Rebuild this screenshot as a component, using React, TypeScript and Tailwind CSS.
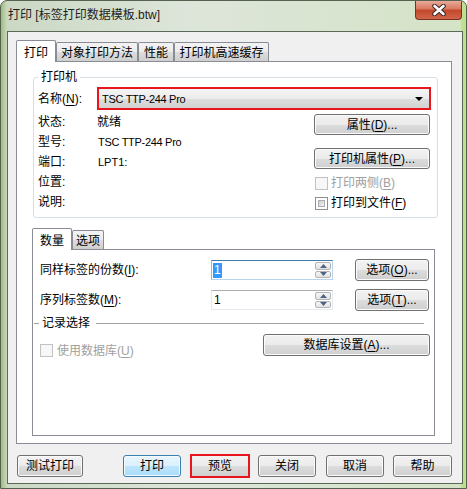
import React from "react";

const btn =
  "flex items-center justify-center rounded-[3px] border border-[#707070] bg-[linear-gradient(#f2f2f2_0%,#ebebeb_50%,#dddddd_50%,#cfcfcf_100%)] shadow-[inset_0_0_0_1px_#fbfbfb] text-[12px] leading-[16px] text-black";

function U({ children }: { children: React.ReactNode }) {
  return <span className="underline underline-offset-[2px]">{children}</span>;
}

function Check({ disabled }: { disabled?: boolean }) {
  if (disabled) {
    return <span className="block w-[13px] h-[13px] shrink-0 border border-[#c2c2c2] bg-[#f7f7f7]" />;
  }
  return (
    <span className="block w-[13px] h-[13px] shrink-0 border border-[#8e8f8f] bg-white p-[2px]">
      <span className="block w-full h-full border border-[#a9aeb5] bg-[linear-gradient(135deg,#c6cbd2,#f4f4f4)]" />
    </span>
  );
}

function SpinArrow({ up }: { up?: boolean }) {
  return (
    <span className="flex-1 flex items-center justify-center border border-[#b4b4b4] rounded-[2px] bg-[linear-gradient(#f7f7f7,#e2e2e2)]">
      <svg width="7" height="4" viewBox="0 0 7 4">
        {up ? <path d="M0 4 L3.5 0 L7 4 Z" fill="#4f6386" /> : <path d="M0 0 L7 0 L3.5 4 Z" fill="#4f6386" />}
      </svg>
    </span>
  );
}

function Spin({ focused, value }: { focused?: boolean; value: string }) {
  return (
    <div
      className={`flex w-[122px] h-[20px] border ${
        focused
          ? "border-[#b7d4ec] border-t-[#3d7bad] border-l-[#8fbbe0]"
          : "border-[#e3e9ef] border-t-[#abadb3]"
      } bg-white`}
    >
      <div className="flex-1 flex items-center pl-[1px] text-[12px]">
        {focused ? <span className="bg-[#3399ff] text-white px-[1px] leading-[15px]">{value}</span> : <span className="px-[1px]">{value}</span>}
      </div>
      <div className="flex flex-col w-[17px] gap-[1px] py-px pr-px">
        <SpinArrow up />
        <SpinArrow />
      </div>
    </div>
  );
}

function Tab({ label, w, selected }: { label: string; w: string; selected?: boolean }) {
  return selected ? (
    <div className={`${w} h-[22px] -mb-px relative z-10 flex items-center justify-center pt-[2px] border-x border-t border-[#898c95] rounded-t-[2px] bg-white`}>
      {label}
    </div>
  ) : (
    <div className={`${w} h-[19px] flex items-center justify-center pt-px border-x border-t border-[#898c95] rounded-t-[2px] bg-[linear-gradient(#f3f3f3_0%,#ebebeb_50%,#dddddd_50%,#cfcfcf_100%)]`}>
      {label}
    </div>
  );
}

export default function App() {
  return (
    <div className="w-[467px] h-[489px] flex flex-col overflow-hidden rounded-t-[7px] border border-[#55624f] bg-[linear-gradient(90deg,#9fbd7b_0px,#cbd8c3_6px,#dde5da_40%,#d5e3c7_459px,#c0de90_461px)] font-['Liberation_Sans','Noto_Sans_CJK_SC',sans-serif] text-[12px] leading-[16px] text-black">
      {/* title bar */}
      <div className="h-[30px] shrink-0 flex items-start">
        <div className="pl-[7px] pt-[6px] text-[#1e1e1e]">打印 [标签打印数据模板.btw]</div>
        <div className="ml-auto mr-[4px] -mt-px w-[47px] h-[20px] flex items-center justify-center rounded-b-[4px] border border-t-0 border-[#7b3022] bg-[linear-gradient(#eab0a2_0%,#da7a62_45%,#c3492c_55%,#d0654a_100%)]">
          <svg width="16" height="12" viewBox="0 0 16 12">
            <path d="M3.5 2 L12.5 10 M12.5 2 L3.5 10" stroke="#3a2b29" strokeWidth="4.6" strokeLinecap="round" />
            <path d="M3.5 2 L12.5 10 M12.5 2 L3.5 10" stroke="#ffffff" strokeWidth="2.6" strokeLinecap="round" />
          </svg>
        </div>
      </div>

      <div className="flex-1 flex pl-[6px] pr-[3px] pb-[4px]">
        <div className="flex-1 flex flex-col border border-[#5b6a58] bg-[#f0f0f0] pl-[8px] pr-[10px] pt-[8px]">
          {/* main tabs */}
          <div className="flex items-end h-[21px]">
            <Tab label="打印" w="w-[40px]" selected />
            <Tab label="对象打印方法" w="w-[82px]" />
            <Tab label="性能" w="w-[36px]" />
            <Tab label="打印机高速缓存" w="w-[95px]" />
          </div>

          <div className="h-[383px] border border-[#898c95] bg-white flex flex-col">
            <fieldset className="mt-[7px] ml-[16px] mr-[13px] border border-[#d5dfe5] rounded-[3px] p-0">
              <legend className="ml-[4px] px-[3px] leading-[16px]">打印机</legend>
              <div className="pl-[4px] pr-[6px] pb-[4px]">
                <div className="mt-[2px] flex items-center h-[23px]">
                  <span className="w-[59px] shrink-0">
                    名称(<U>N</U>):
                  </span>
                  <div className="flex-1 h-[23px] border-2 border-[#e8141e] flex items-center pl-[3px] pr-[6px] bg-[linear-gradient(#f4f4f4_0%,#ebebeb_50%,#dedede_50%,#d2d2d2_100%)]">
                    <span className="text-[11px] tracking-[-0.3px]">TSC TTP-244 Pro</span>
                    <svg className="ml-auto" width="8" height="4" viewBox="0 0 8 4">
                      <path d="M0 0 L8 0 L4 4 Z" fill="#000" />
                    </svg>
                  </div>
                </div>

                <div className="flex mt-[2px]">
                  <div className="flex-1 flex flex-col">
                    <div className="h-[20px] flex items-center">
                      <span className="w-[59px]">状态:</span>
                      <span>就绪</span>
                    </div>
                    <div className="h-[20px] flex items-center">
                      <span className="w-[59px]">型号:</span>
                      <span className="text-[11px] tracking-[-0.3px] pl-px">TSC TTP-244 Pro</span>
                    </div>
                    <div className="h-[20px] flex items-center">
                      <span className="w-[59px]">端口:</span>
                      <span className="text-[11px] pl-px">LPT1:</span>
                    </div>
                    <div className="h-[20px] flex items-center">
                      <span className="w-[59px]">位置:</span>
                    </div>
                    <div className="h-[20px] flex items-center">
                      <span className="w-[59px]">说明:</span>
                    </div>
                  </div>
                  <div className="w-[116px] mr-[1px] flex flex-col">
                    <div className={`${btn} mt-[2px] h-[21px]`}>
                      属性(<U>D</U>)...
                    </div>
                    <div className={`${btn} mt-[13px] h-[21px]`}>
                      打印机属性(<U>P</U>)...
                    </div>
                    <div className="mt-[4px] h-[20px] flex items-center pl-px">
                      <Check disabled />
                      <span className="ml-[3px] text-[#a0a0a0]">
                        打印两侧(<U>B</U>)
                      </span>
                    </div>
                    <div className="h-[20px] flex items-center pl-px">
                      <Check />
                      <span className="ml-[3px]">
                        打印到文件(<U>F</U>)
                      </span>
                    </div>
                  </div>
                </div>
              </div>
            </fieldset>

            {/* inner tabs */}
            <div className="mt-[10px] ml-[15px] flex items-end h-[21px]">
              <Tab label="数量" w="w-[40px]" selected />
              <Tab label="选项" w="w-[32px]" />
            </div>
            <div className="ml-[15px] mr-[16px] h-[187px] border border-[#898c95] bg-white flex flex-col">
              <div className="mt-[9px] h-[22px] flex items-center">
                <span className="pl-[7px] w-[178px] shrink-0">
                  同样标签的份数(<U>I</U>):
                </span>
                <Spin focused value="1" />
                <div className={`${btn} ml-auto mr-[5px] w-[74px] h-[22px]`}>
                  选项(<U>O</U>)...
                </div>
              </div>
              <div className="mt-[8px] h-[22px] flex items-center">
                <span className="pl-[7px] w-[178px] shrink-0">
                  序列标签数(<U>M</U>):
                </span>
                <Spin value="1" />
                <div className={`${btn} ml-auto mr-[5px] w-[74px] h-[22px]`}>
                  选项(<U>T</U>)...
                </div>
              </div>
              <div className="mt-[4px] h-[16px] flex items-center">
                <span className="ml-px w-[5px] h-px bg-[#a0a0a0]" />
                <span className="ml-[3px]">记录选择</span>
                <span className="ml-[6px] mr-[10px] flex-1 h-px bg-[#a0a0a0]" />
              </div>
              <div className="mt-[3px] flex items-start">
                <div className="pl-[7px] mt-[10px] h-[13px] flex items-center">
                  <Check disabled />
                  <span className="ml-[4px] text-[#a0a0a0]">
                    使用数据库(<U>U</U>)
                  </span>
                </div>
                <div className={`${btn} ml-auto mr-[4px] w-[167px] h-[22px]`}>
                  数据库设置(<U>A</U>)...
                </div>
              </div>
            </div>
          </div>

          {/* bottom buttons */}
          <div className="mt-[10px] h-[24px] flex items-center">
            <div className={`${btn} ml-px w-[66px] h-[22px]`}>测试打印</div>
            <div className="ml-[40px] w-[58px] h-[22px] flex items-center justify-center rounded-[3px] border border-[#3c7fb1] shadow-[inset_0_0_0_1px_#f4fbff] bg-[linear-gradient(#eaf6fd_0%,#d9f0fc_50%,#bee6fd_50%,#a9dbf6_100%)]">
              打印
            </div>
            <div className="ml-[9px] w-[60px] h-[24px] flex items-center justify-center border-2 border-[#e8141e] bg-[linear-gradient(#f2f2f2_0%,#ebebeb_50%,#dddddd_50%,#cfcfcf_100%)]">
              预览
            </div>
            <div className={`${btn} ml-[8px] w-[58px] h-[22px]`}>关闭</div>
            <div className={`${btn} ml-[10px] w-[58px] h-[22px]`}>取消</div>
            <div className={`${btn} ml-[9px] w-[59px] h-[22px]`}>帮助</div>
          </div>
        </div>
      </div>
    </div>
  );
}
